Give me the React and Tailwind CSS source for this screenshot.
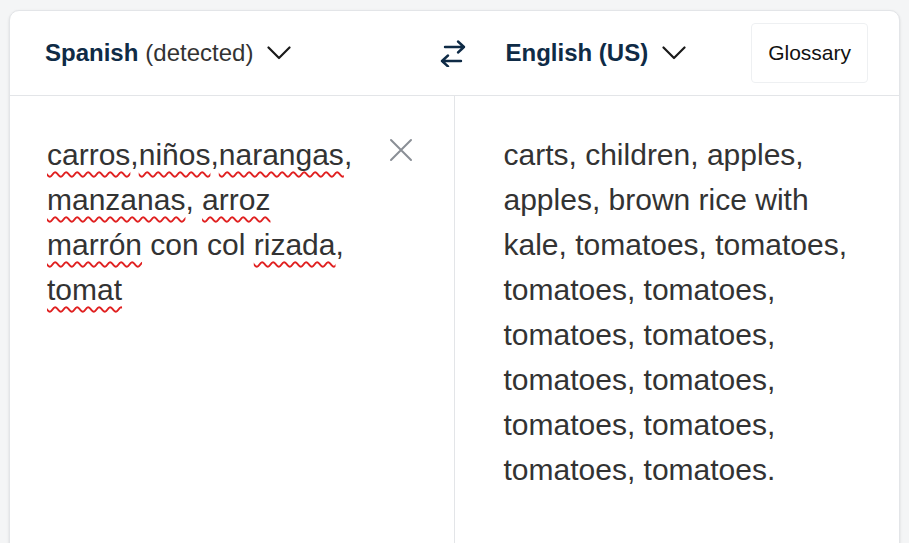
import React from 'react';

const NAVY = 'text-[#0f2b46]';

function Chevron() {
  return (
    <svg width="24" height="14" viewBox="0 0 24 14" fill="none" className="ml-[14px]">
      <path d="M1.5 1.5 L12 12 L22.5 1.5" stroke="#1a1a1a" strokeWidth="2.2" strokeLinecap="round" strokeLinejoin="round" />
    </svg>
  );
}

function SwapIcon() {
  return (
    <svg width="28" height="28" viewBox="0 0 28 28" fill="none">
      <path d="M6 8 H25 M19 2.5 L25 8 L19 13.5" stroke="#0f2b46" strokeWidth="2.4" strokeLinecap="round" strokeLinejoin="round" />
      <path d="M22 22 H3 M9 16.5 L3 22 L9 27.5" stroke="#0f2b46" strokeWidth="2.4" strokeLinecap="round" strokeLinejoin="round" />
    </svg>
  );
}

function Misspelled({ children }) {
  return (
    <span className="underline decoration-wavy decoration-[#e02020] decoration-[1.5px] underline-offset-[6px]">
      {children}
    </span>
  );
}

export default function App() {
  return (
    <div className="min-h-[543px] bg-[#f4f5f6] px-[9px] pt-[10px] font-['Liberation_Sans',Arial,sans-serif]">
      <div className="bg-white border border-[#e3e5e8] rounded-[10px] shadow-sm overflow-hidden min-h-[560px] flex flex-col">
        {/* Header */}
        <div className="grid grid-cols-2 h-[85px] border-b border-[#e3e5e8]">
          <div className="flex items-center pl-[35px]">
            <span className={`text-[24px] font-bold ${NAVY}`}>Spanish</span>
            <span className="text-[24px] text-[#333] ml-[7px]">(detected)</span>
            <Chevron />
            <button className="ml-auto -mr-[12px] w-[28px] h-[28px] flex items-center justify-center">
              <SwapIcon />
            </button>
          </div>
          <div className="flex items-center pl-[51px] pr-[31px]">
            <span className={`text-[24px] font-bold ${NAVY}`}>English (US)</span>
            <Chevron />
            <button className="ml-auto h-[60px] px-[16px] border border-[#eef0f2] rounded-[4px] text-[21px] text-[#111]">
              Glossary
            </button>
          </div>
        </div>

        {/* Body */}
        <div className="grid grid-cols-2 flex-1">
          <div className="border-r border-[#e3e5e8] pl-[37px] pt-[36px] flex items-start">
            <p className="w-[325px] text-[30px] leading-[45px] text-[#333]">
              <Misspelled>carros</Misspelled>,<Misspelled>niños</Misspelled>,<Misspelled>narangas</Misspelled>,{' '}
              <Misspelled>manzanas</Misspelled>, <Misspelled>arroz</Misspelled>{' '}
              <Misspelled>marrón</Misspelled> con col <Misspelled>rizada</Misspelled>,{' '}
              <Misspelled>tomat</Misspelled>
            </p>
            <button className="ml-[16px] mt-[5px] w-[26px] h-[26px] flex items-center justify-center">
              <svg width="24" height="24" viewBox="0 0 24 24" fill="none">
                <path d="M2 2 L22 22 M22 2 L2 22" stroke="#8a8f96" strokeWidth="2" strokeLinecap="round" />
              </svg>
            </button>
          </div>
          <div className="pl-[49px] pr-[40px] pt-[36px]">
            <p className="w-[355px] text-[30px] leading-[45px] text-[#333]">
              carts, children, apples, apples, brown rice with kale, tomatoes, tomatoes, tomatoes,
              tomatoes, tomatoes, tomatoes, tomatoes, tomatoes, tomatoes, tomatoes, tomatoes,
              tomatoes.
            </p>
          </div>
        </div>
      </div>
    </div>
  );
}
